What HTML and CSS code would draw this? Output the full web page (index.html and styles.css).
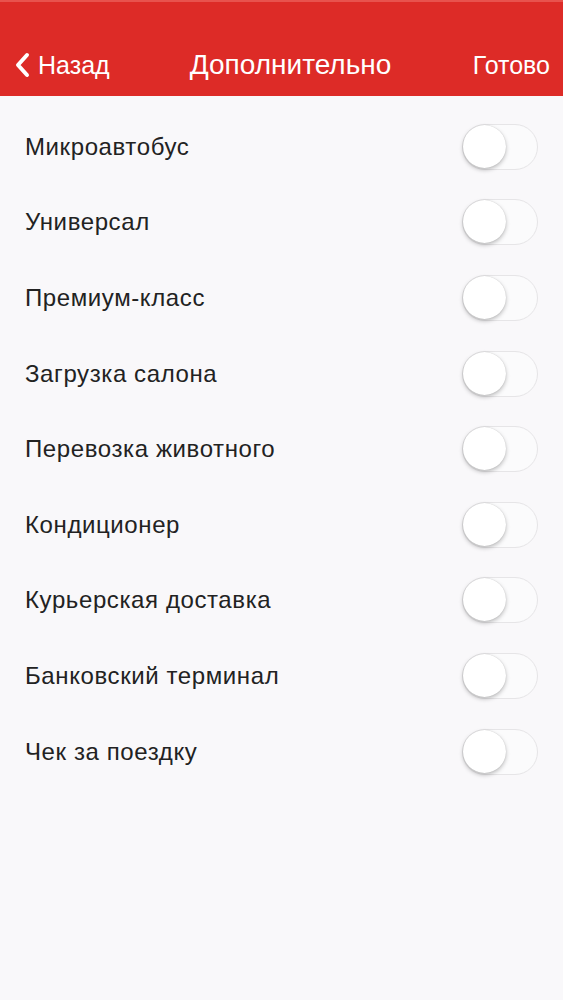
FILE: index.html
```html
<!DOCTYPE html>
<html lang="ru">
<head>
    <meta charset="UTF-8">
    <meta name="viewport" content="width=device-width, initial-scale=1.0">
    <title>Дополнительно</title>
    <link rel="stylesheet" href="styles.css">
</head>
<body>
    <div class="topbar">
        <a class="back" href="#">
            <svg class="chevron" width="18" height="26" viewBox="0 0 18 26">
                <path d="M14 3 L5 13 L14 23" fill="none" stroke="#fff" stroke-width="4" stroke-linecap="round" stroke-linejoin="round"/>
            </svg>
            Назад
        </a>
        <div class="title">Дополнительно</div>
        <a class="done" href="#">Готово</a>
    </div>
    <div class="options">
        <div class="option"><span>Микроавтобус</span><label class="switch"><input type="checkbox"><span class="knob"></span></label></div>
        <div class="option"><span>Универсал</span><label class="switch"><input type="checkbox"><span class="knob"></span></label></div>
        <div class="option"><span>Премиум-класс</span><label class="switch"><input type="checkbox"><span class="knob"></span></label></div>
        <div class="option"><span>Загрузка салона</span><label class="switch"><input type="checkbox"><span class="knob"></span></label></div>
        <div class="option"><span>Перевозка животного</span><label class="switch"><input type="checkbox"><span class="knob"></span></label></div>
        <div class="option"><span>Кондиционер</span><label class="switch"><input type="checkbox"><span class="knob"></span></label></div>
        <div class="option"><span>Курьерская доставка</span><label class="switch"><input type="checkbox"><span class="knob"></span></label></div>
        <div class="option"><span>Банковский терминал</span><label class="switch"><input type="checkbox"><span class="knob"></span></label></div>
        <div class="option"><span>Чек за поездку</span><label class="switch"><input type="checkbox"><span class="knob"></span></label></div>
    </div>
</body>
</html>
```

FILE: styles.css
```css
body {
    margin: 0;
    font-family: "Liberation Sans", Arial, sans-serif;
    background-color: #f9f8fa;
    color: #222;
}
.topbar {
    height: 96px;
    box-sizing: border-box;
    padding: 32px 13px 0 13px;
    background: #dd2b27;
    border-top: 2px solid #e8524d;
    display: flex;
    align-items: center;
    justify-content: space-between;
    color: white;
    font-size: 25px;
}
.topbar a {
    color: white;
    text-decoration: none;
}
.back {
    display: flex;
    align-items: center;
    gap: 7px;
    width: 120px;
}
.title {
    flex: 1;
    text-align: center;
    padding-left: 18px;
    font-size: 28px;
}
.done {
    width: 120px;
    text-align: right;
}
.options {
    padding-top: 13px;
}
.option {
    height: 75.6px;
    display: flex;
    align-items: center;
    justify-content: space-between;
    padding: 0 25px 0 25px;
    font-size: 24px;
    letter-spacing: 0.6px;
}
.switch {
    position: relative;
    width: 76px;
    height: 46px;
    box-sizing: border-box;
    border: 1.5px solid #e6e5e7;
    border-radius: 23px;
    background: #fbfbfc;
}
.switch input {
    display: none;
}
.knob {
    position: absolute;
    left: 0;
    top: 0;
    width: 43px;
    height: 43px;
    border-radius: 50%;
    background: white;
    box-shadow: 0 2px 4px rgba(0, 0, 0, 0.25), 0 0 1px rgba(0, 0, 0, 0.2);
}
```
